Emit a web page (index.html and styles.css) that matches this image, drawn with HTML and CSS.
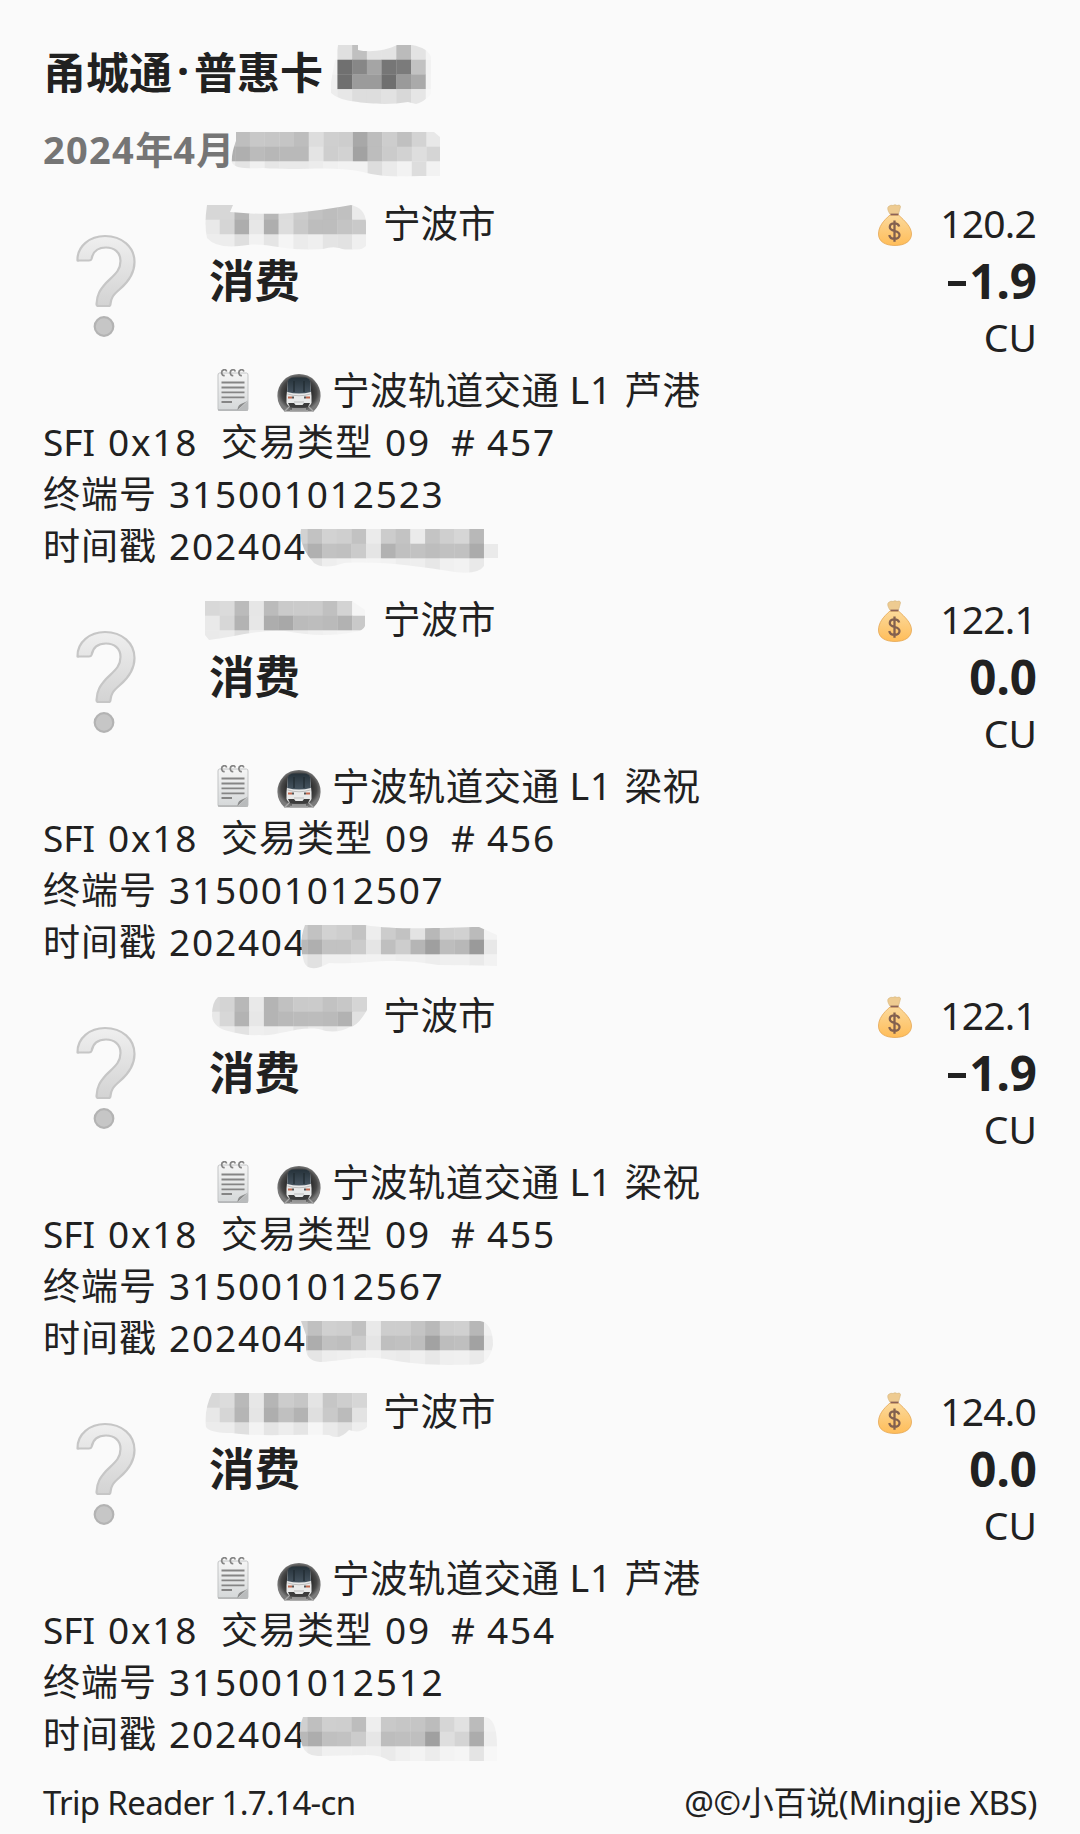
FILE: index.html
```html
<!DOCTYPE html>
<html lang="zh-CN">
<head>
<meta charset="utf-8">
<title>甬城通·普惠卡</title>
<link rel="stylesheet" href="styles.css">
</head>
<body>
<svg class="defs" width="0" height="0" aria-hidden="true">
  <defs>
    <linearGradient id="silver" x1="0" y1="0" x2="0" y2="1"><stop offset="0" stop-color="#efefef"/><stop offset="1" stop-color="#d3d3d3"/></linearGradient>
    <linearGradient id="gold" x1="0" y1="0" x2="0" y2="1"><stop offset="0" stop-color="#fbd99b"/><stop offset="1" stop-color="#ffbd59"/></linearGradient>
    <linearGradient id="paper" x1="0" y1="0" x2="0" y2="1"><stop offset="0" stop-color="#f5f5f5"/><stop offset="1" stop-color="#d5d8d9"/></linearGradient>
    <radialGradient id="tunnel"><stop offset="0.6" stop-color="#303030"/><stop offset="0.82" stop-color="#484848"/><stop offset="1" stop-color="#7a7a7a"/></radialGradient>
    <linearGradient id="glass" x1="0" y1="0" x2="0" y2="1"><stop offset="0" stop-color="#26323a"/><stop offset="1" stop-color="#465460"/></linearGradient>
    <symbol id="question" viewBox="0 0 62 106">
      <path d="M2.500 26.500C2 12 15 2 30 2C47 2 59.500 13 59.500 28C59.500 41 52 49 45 55C38 61 36 64 35.500 70Q35.500 72 33.500 72H23.500Q21.500 72 21.500 70C22 60 25 56 31 49C39 41 45.500 37 45.500 27C45.500 18 39 13.500 31 13.500C23 13.500 18 17 16.500 25Q16 26.500 14 26.500H4Q2.500 27 2.500 26.500Z" fill="url(#silver)" stroke="#c6c6c6" stroke-width="2.200" stroke-linejoin="round"/>
      <circle cx="29" cy="92.500" r="9.300" fill="#c6c6c6" stroke="#b3b3b3" stroke-width="2.200"/>
    </symbol>
    <symbol id="bag" viewBox="0 0 34 42">
      <path d="M12 10C10 7 9 4 10.500 2.500Q13 .5 15 1.500Q17 0 19 1.500Q22 0 22.500 2.500C22 5 21 8 20.500 10Z" fill="#eecb91" stroke="#d8b77e" stroke-width=".7"/>
      <path d="M12 11C5 17 .5 23 .5 30C.5 37.500 7 41.500 17 41.500S33.500 37 33.500 30C33.500 23 27 17 20.500 11Z" fill="url(#gold)" stroke="#e5a652" stroke-width=".8"/>
      <path d="M12.500 10.500H20.500" stroke="#8c6257" stroke-width="1.700"/>
      <path d="M21.200 22.500C20.500 20 18.500 19.400 16.500 19.400C13.600 19.400 11.800 21 11.800 23C11.800 28.500 21.500 25.500 21.500 31C21.500 33.300 19.400 34.900 16.500 34.900C13.800 34.900 11.800 33.700 11.300 31M16.500 16.500V37.800" fill="none" stroke="#82604f" stroke-width="2.300"/>
    </symbol>
    <symbol id="note" viewBox="0 0 32 42">
      <path d="M2.500 4H29.500Q31 4 31 6V40Q31 41.300 29.500 41.300H2.500Q1 41.300 1 40V6Q1 4 2.500 4Z" fill="url(#paper)" stroke="#c2c4c5"/>
      <path d="M1 41H31" stroke="#a9abac" stroke-width="1.200"/>
      <path d="M4.500 13.500H27.500M4.500 18.500H27.500M4.500 23.300H27.500M4.500 28.300H27.500M4.500 33H15" stroke="#858585" stroke-width="1.800"/>
      <path d="M20.500 41C21 37 22 35.500 25 34.500Q29 33 30.800 31.500Z" fill="#8b8c8c"/><path d="M21 41L31 32V41Z" fill="#b9bbbc"/>
      <path d="M7.700 6.500A2.600 2.900 0 1 1 9.700 2.500M16.300 6.500A2.600 2.900 0 1 1 18.300 2.500M24.900 6.500A2.600 2.900 0 1 1 26.900 2.500" fill="none" stroke="#858585" stroke-width="1.700"/>
    </symbol>
    <symbol id="metro" viewBox="0 0 44 40">
      <path d="M7.500 39.500A21.600 21.600 0 1 1 36.500 39.500Z" fill="url(#tunnel)"/>
      <path d="M13 34L7.500 39.500M31 34L36.500 39.500M15 37H29M13 39H31" stroke="#a9a9a9" stroke-width="1.300"/>
      <path d="M11 9Q12 6.500 15 6H29Q32 6.500 33 9L34.500 24V31Q33 35 28 35H16Q11 35 9.500 31V24Z" fill="#e9eaea"/>
      <path d="M10.800 9Q12 5.500 16 5.500H28Q32 5.500 33.200 9L33.800 20Q22 23 10.200 20Z" fill="url(#glass)"/>
      <path d="M17 9V20M27 9V20" stroke="#202a30" stroke-width="1.200"/>
      <path d="M10.500 22Q22 25.500 33.500 22M17 30H27" fill="none" stroke="#bdbdbd"/>
      <path d="M11 25.500H15M29 25.500H33" stroke="#c0684f" stroke-width="2"/>
      <path d="M15 25.500H17M27 25.500H29" stroke="#555" stroke-width="2"/>
      <path d="M11 31H17L18.500 33H25.500L27 31H33L31 35H13Z" fill="#3c3c3c"/>
    </symbol>
  </defs>
</svg>
<main class="page">
  <header class="head">
    <h1 class="title">甬城通<span class="dot">·</span>普惠卡<svg class="mosaic m-title" data-mosaic="title"></svg></h1>
    <h2 class="month"><span class="lat">2024</span>年<span class="lat">4</span>月<svg class="mosaic m-month" data-mosaic="month"></svg></h2>
  </header>

  <article class="record">
    <div class="summary">
      <svg class="question"><use href="#question"/></svg>
      <div class="what"><div class="city"><svg class="mosaic m-date" data-mosaic="date1"></svg>宁波市</div><div class="kind">消费</div></div>
      <div class="money"><div class="balance"><svg class="bag"><use href="#bag"/></svg>120.2</div><div class="amount"><span class="minus"></span>1.9</div><div class="unit">CU</div></div>
    </div>
    <div class="place"><svg class="note"><use href="#note"/></svg><svg class="metro"><use href="#metro"/></svg><span>宁波轨道交通</span><span class="line">L1</span><span>芦港</span></div>
    <div class="raw"><span class="sfi">SFI</span><span class="hex">0x18</span><span class="type">交易类型</span><span class="code">09</span><span class="hash">#</span><span>457</span></div>
    <div class="raw"><span class="label">终端号</span><span>315001012523</span></div>
    <div class="raw"><span class="label">时间戳</span><span>202404</span><svg class="mosaic m-time" data-mosaic="time1"></svg></div>
  </article>

  <article class="record">
    <div class="summary">
      <svg class="question"><use href="#question"/></svg>
      <div class="what"><div class="city"><svg class="mosaic m-date" data-mosaic="date2"></svg>宁波市</div><div class="kind">消费</div></div>
      <div class="money"><div class="balance"><svg class="bag"><use href="#bag"/></svg>122.1</div><div class="amount">0.0</div><div class="unit">CU</div></div>
    </div>
    <div class="place"><svg class="note"><use href="#note"/></svg><svg class="metro"><use href="#metro"/></svg><span>宁波轨道交通</span><span class="line">L1</span><span>梁祝</span></div>
    <div class="raw"><span class="sfi">SFI</span><span class="hex">0x18</span><span class="type">交易类型</span><span class="code">09</span><span class="hash">#</span><span>456</span></div>
    <div class="raw"><span class="label">终端号</span><span>315001012507</span></div>
    <div class="raw"><span class="label">时间戳</span><span>202404</span><svg class="mosaic m-time" data-mosaic="time2"></svg></div>
  </article>

  <article class="record">
    <div class="summary">
      <svg class="question"><use href="#question"/></svg>
      <div class="what"><div class="city"><svg class="mosaic m-date" data-mosaic="date3"></svg>宁波市</div><div class="kind">消费</div></div>
      <div class="money"><div class="balance"><svg class="bag"><use href="#bag"/></svg>122.1</div><div class="amount"><span class="minus"></span>1.9</div><div class="unit">CU</div></div>
    </div>
    <div class="place"><svg class="note"><use href="#note"/></svg><svg class="metro"><use href="#metro"/></svg><span>宁波轨道交通</span><span class="line">L1</span><span>梁祝</span></div>
    <div class="raw"><span class="sfi">SFI</span><span class="hex">0x18</span><span class="type">交易类型</span><span class="code">09</span><span class="hash">#</span><span>455</span></div>
    <div class="raw"><span class="label">终端号</span><span>315001012567</span></div>
    <div class="raw"><span class="label">时间戳</span><span>202404</span><svg class="mosaic m-time" data-mosaic="time3"></svg></div>
  </article>

  <article class="record">
    <div class="summary">
      <svg class="question"><use href="#question"/></svg>
      <div class="what"><div class="city"><svg class="mosaic m-date" data-mosaic="date4"></svg>宁波市</div><div class="kind">消费</div></div>
      <div class="money"><div class="balance"><svg class="bag"><use href="#bag"/></svg>124.0</div><div class="amount">0.0</div><div class="unit">CU</div></div>
    </div>
    <div class="place"><svg class="note"><use href="#note"/></svg><svg class="metro"><use href="#metro"/></svg><span>宁波轨道交通</span><span class="line">L1</span><span>芦港</span></div>
    <div class="raw"><span class="sfi">SFI</span><span class="hex">0x18</span><span class="type">交易类型</span><span class="code">09</span><span class="hash">#</span><span>454</span></div>
    <div class="raw"><span class="label">终端号</span><span>315001012512</span></div>
    <div class="raw"><span class="label">时间戳</span><span>202404</span><svg class="mosaic m-time" data-mosaic="time4"></svg></div>
  </article>

  <footer class="foot"><span class="app">Trip Reader 1.7.14-cn</span><span class="credit">@©小百说(Mingjie XBS)</span></footer>
</main>
<script src="script.js"></script>
</body>
</html>
```
FILE: styles.css
```css
* { box-sizing: border-box; }
body { margin: 0; background: #fafafa; color: #212121; font-family: "Noto Sans", "Noto Sans CJK SC", sans-serif; }
.defs { display: block; }
.page { width: 1080px; height: 1834px; padding: 42px 43px 0; overflow: hidden; }
svg { flex: none; overflow: visible; }
.title, .month { margin: 0; display: flex; align-items: center; white-space: nowrap; }
.title { height: 62px; padding-bottom: 5px; font: 700 43px/57px "Noto Sans CJK SC", sans-serif; }
.dot { width: 22px; text-align: center; font-family: "Noto Sans", sans-serif; }
.month { height: 52px; margin-top: 19px; color: #757575; font-size: 38px; line-height: 52px; }
.month .lat { letter-spacing: 1.300px; }
.head { height: 154px; }
.mosaic { height: 59px; display: block; }
.m-title { width: 110px; margin: 0 0 -8px 7px; }
.m-month { width: 220px; margin: 18px 0 -6px -3px; }
.m-date { width: 165px; margin: 23px 13px 0 -1px; }
.m-time { width: 200px; margin: 22px 0 -3px -7px; }
.record { height: 396.100px; }
.summary { display: flex; height: 168px; }
.question { width: 62px; height: 106px; margin: 38px 0 0 32px; }
.what { width: 300px; margin-left: 69px; }
.city { height: 56px; padding-bottom: 2px; display: flex; align-items: center; font-size: 37.500px; line-height: 50px; white-space: nowrap; }
.kind { height: 58px; line-height: 56px; font-size: 45.500px; font-weight: 700; padding-left: 3px; }
.money { margin-left: auto; text-align: right; }
.balance { display: flex; align-items: center; justify-content: flex-end; height: 56px; padding-bottom: 2px; font-size: 39px; line-height: 54px; letter-spacing: -0.800px; padding-right: 1px; }
.bag { width: 34px; height: 42px; margin: 3px 28px 0 0; }
.amount { display: flex; align-items: center; justify-content: flex-end; height: 58px; font-size: 47.500px; line-height: 56px; font-weight: 700; }
.minus { width: 18px; height: 5px; margin: 5px 3px 0 0; background: #212121; }
.unit { height: 54px; line-height: 54px; font-size: 39px; }
.place { display: flex; align-items: center; height: 51.500px; padding: 0 0 0 174px; font-size: 37.500px; letter-spacing: .4px; line-height: 50px; white-space: nowrap; }
.note { width: 32px; height: 42px; margin-right: 28px; }
.metro { width: 44px; height: 40px; margin: 5px 11px 0 0; }
.line { margin: 0 12px 0 10px; letter-spacing: 1px; }
.raw { display: flex; align-items: center; height: 52px; font-size: 37px; line-height: 52px; letter-spacing: 1.800px; white-space: nowrap; }
.sfi { width: 65px; letter-spacing: 0; }
.hex { width: 113px; }
.type, .label { letter-spacing: 1px; margin-right: 12px; }
.code { width: 66px; }
.hash { width: 36px; }
.foot { display: flex; justify-content: space-between; align-items: center; height: 44px; margin-top: 1px; font-size: 33px; line-height: 44px; white-space: nowrap; }
.app { letter-spacing: -.67px; }
.credit { letter-spacing: -.3px; }
```
FILE: script.js
```js
// Each mask: an outline over rows of grey cells.
const CELL = 14.72;
const masks = {
  title: { x: -7.3, clip: 'M8 0H28V5C40 8 58 5 67 0H82Q98 3 101 12V49Q94 57 86 59L78 57C62 60 40 59 28 57Q8 55 1 48V37Q4 20 8 0Z',
    rows: ['fa e0 c0 e3 e3 bb e3 f4', 'f4 70 87 a5 76 7b c2 f2', 'f0 6f 9b 9b 6f 9a aa f3', 'ed e7 dd dd e2 d8 e6 f7'] },
  month: { x: -10.6, clip: 'M5 0H203L209 5V44H189C170 46 145 44 132 40C100 33 72 39 32 36C15 37 4 36 1 31Q0 22 5 9Z',
    rows: ['be be c8 c6 c5 bd dd cf cd a8 bd cd c0 d3 e8', 'af af bb b7 b9 b9 e4 ce d2 a2 bd cb d2 de d5', 'ef e4 f0 e6 e9 e9 ec f0 f2 f2 dd ea f2 dd f2'] },
  date1: { x: 0, clip: 'M2 0H28L25 7C80 12 110 6 146 0Q160 3 161 17V41Q155 47 140 45Q130 40 118 44C90 48 60 37 43 40Q12 45 2 33Q-1 20 2 0Z',
    rows: ['d7 d7 b5 e4 b7 dc cc c2 bd c0 ea', 'e9 d5 ad e7 ae dd c9 bd bd c4 c9', 'ed ed df f2 e5 f5 eb ef e4 e2 ef'] },
  date2: { x: 0, clip: 'M0 0H147L160 9V25Q158 30 150 31C125 36 100 34 80 30C55 28 30 36 4 39L0 34Z',
    rows: ['d8 db bb e6 bb ca cb cb c0 d3 f5', 'e9 d7 b3 e7 ad a8 bb bd ba b2 c9', 'ea eb de ef ed ef ed f0 f2 f4 f5'] },
  date3: { x: 0, clip: 'M13 0H162V13Q153 29 145 30Q130 38 114 32C90 29 72 40 54 38Q40 39 23 34Q7 30 7 18Q7 5 13 0Z',
    rows: ['d8 d4 b8 e9 b4 c1 ca cb c2 c7 d5', 'e8 d7 b3 e7 b4 b9 bb bc ba b2 e1', 'ea eb e2 ef ed ef e4 eb e6 ec f5'] },
  date4: { x: 0, clip: 'M7 0H162V34Q155 41 144 37Q134 48 124 42C90 41 55 44 27 40Q5 40 1 34Q-1 16 7 0Z',
    rows: ['d8 dc b9 e7 b5 cc c6 e4 c6 ce d6', 'e8 d6 b5 e5 ae c0 b3 df c9 bb e3', 'ec ec df f3 e5 ed e5 f6 ea e2 ee'] },
  time1: { x: -7.4, clip: 'M1 0H184V15H198V29H184V37Q178 46 155 43C120 38 85 32 44 34Q24 41 14 34Q-2 17 1 0Z',
    rows: ['d2 c2 d2 cf c2 eb cc c3 eb c4 cf d6 b8 fa', 'c2 b0 c2 c0 cb e5 b2 c0 c2 bd c1 c1 ab ea', 'e9 e3 ee f1 f4 f4 f2 ed ee e7 f0 f2 e9 fa'] },
  time2: { x: -7.4, clip: 'M5 0H65C100 6 152 2 179 2L197 10V41Q165 40 138 40C90 31 62 40 29 38Q9 49 4 37Q-2 18 5 0Z',
    rows: ['d0 c2 d2 ce c3 ed cc c2 e3 b8 cf d1 bb f3', 'b8 af c2 c2 cb e5 bf cd b5 9f bd b8 9a e8', 'e9 e1 f0 f0 f2 f2 f1 ee f0 ed ef ef ea f2'] },
  time3: { x: -7.4, clip: 'M1 0H180Q193 2 193 24Q190 40 180 43C145 45 116 44 86 38C61 34 40 40 20 41Q6 40 6 27V14Z',
    rows: ['d0 c0 d0 ce c1 e9 cd cd c4 b9 ce d0 b7 f0', 'c0 ad c1 be cb e5 bf c1 be a2 bd bf a2 ea', 'e9 e5 ed ef f1 f2 ec ea ef e8 ef f0 ea f4'] },
  time4: { x: -7.4, clip: 'M3 0H184Q197 0 197 29V44H90Q81 38 68 38L20 39Q6 40 2 28Q-3 13 3 0Z',
    rows: ['d0 bf cf ce bd ee c9 c6 c5 bc d6 e1 bb f1', 'b8 ad c0 c2 cc e6 bd bf bf a0 de d4 ac ee', 'eb e7 f0 f0 ef ef ea f0 f3 ec f3 f5 e4 f7'] },
};
const NS = 'http://www.w3.org/2000/svg';
for (const svg of document.querySelectorAll('[data-mosaic]')) {
  const name = svg.dataset.mosaic;
  const mask = masks[name];
  const clip = document.createElementNS(NS, 'clipPath');
  clip.id = 'clip-' + name;
  const outline = document.createElementNS(NS, 'path');
  outline.setAttribute('d', mask.clip);
  clip.append(outline);
  const group = document.createElementNS(NS, 'g');
  group.setAttribute('clip-path', `url(#${clip.id})`);
  mask.rows.forEach((row, r) => row.split(' ').forEach((v, c) => {
    const rect = document.createElementNS(NS, 'rect');
    rect.setAttribute('x', mask.x + c * CELL);
    rect.setAttribute('y', r * CELL);
    rect.setAttribute('width', CELL + 0.3);
    rect.setAttribute('height', CELL + 0.3);
    rect.setAttribute('fill', '#' + v + v + v);
    group.append(rect);
  }));
  svg.append(clip, group);
}
```
